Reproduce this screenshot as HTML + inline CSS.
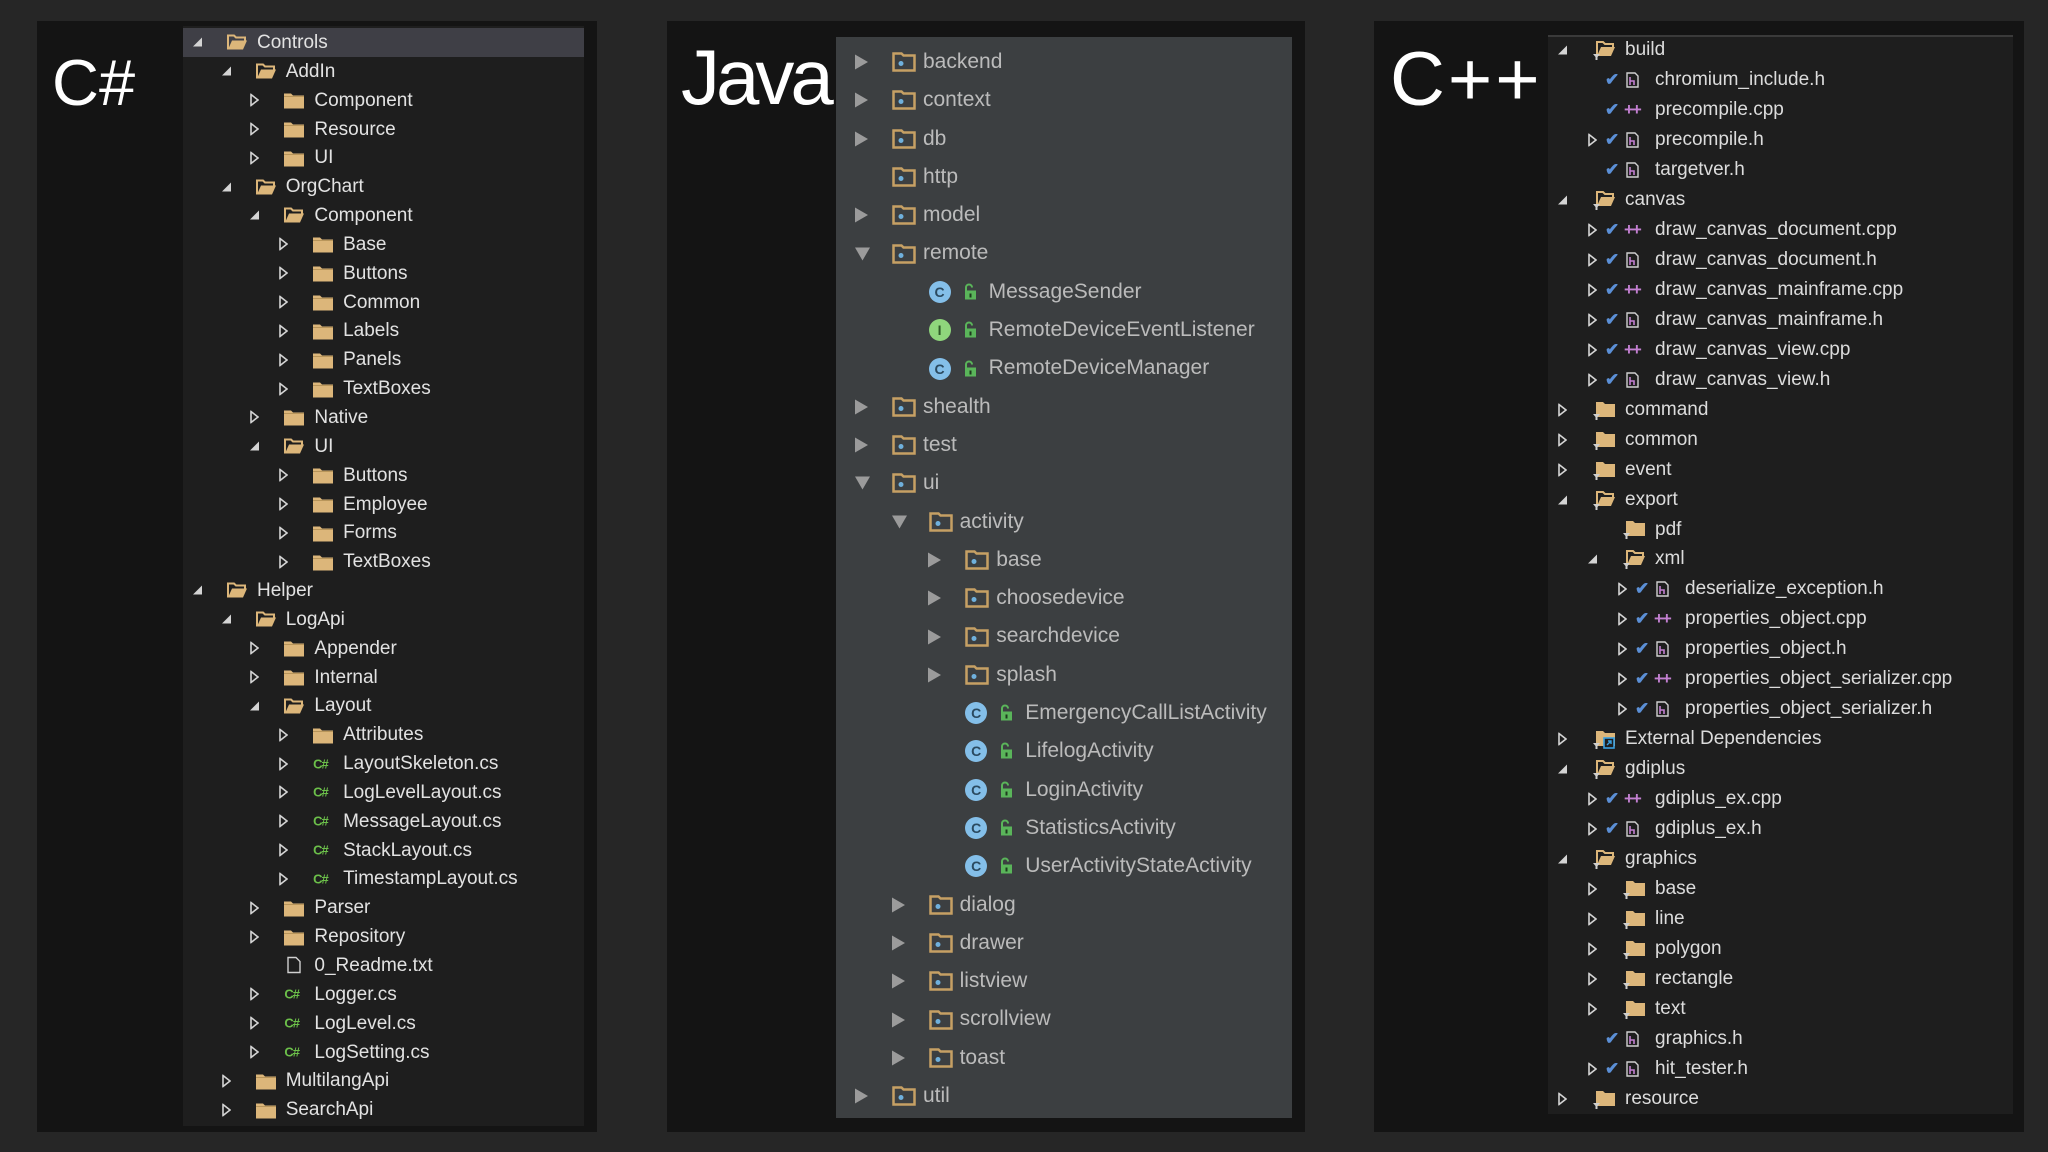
<!DOCTYPE html>
<html><head><meta charset="utf-8">
<style>
*{margin:0;padding:0;box-sizing:border-box}
body{width:2048px;height:1152px;background:#262626;position:relative;overflow:hidden;font-family:"Liberation Sans",sans-serif}
.panel{position:absolute;background:#141414}
.lbl{position:absolute;color:#fff;line-height:normal;white-space:nowrap}
.tree{position:absolute;overflow:hidden}
.r{position:relative;white-space:nowrap}
.r>*{position:absolute;top:50%;transform:translateY(-50%)}
.r>span{top:0;transform:none}
.l0{--l:0}.l1{--l:1}.l2{--l:2}.l3{--l:3}
/* C# */
#cs{left:183px;top:26px;width:401px;height:1100px;background:#1e1e1e;padding-top:2px}
#cs .r{height:28.85px}
#cs .r>span{left:calc(var(--l)*28.7px + 74px);line-height:30px;font-size:19px;color:#e2e2e2}
#cs .a{left:calc(var(--l)*28.7px + 10px)}
#cs .ic{left:calc(var(--l)*28.7px + 44px)}
#cs .cf{left:calc(var(--l)*28.7px + 44px);color:#6cc04a;font-weight:bold;font-size:13px;letter-spacing:-1px}
#cs .hl{background:#3f3f46}
/* Java */
#jv{left:836px;top:37px;width:456px;height:1081px;background:#3c3f41;padding-top:6px}
#jv .r{height:38.3px}
#jv .r>span{left:calc(var(--l)*36.6px + 87px);line-height:38.3px;font-size:21px;color:#bbbbbb}
#jv .r>span.k{left:calc(var(--l)*36.6px + 116px)}
#jv .a{left:calc(var(--l)*36.6px + 19px)}
#jv .ic{left:calc(var(--l)*36.6px + 56px)}
#jv .cl{left:calc(var(--l)*36.6px + 56px);width:22px;height:22px;border-radius:50%;background:#84bfe9;color:#2b4a60;font-size:14px;font-weight:bold;text-align:center;line-height:22px}
#jv .cl.i{background:#8fd67c;color:#2f5a28}
#jv .lk{left:calc(var(--l)*36.6px + 90px)}
/* C++ */
#cp{left:1548px;top:35px;width:465px;height:1079px;background:#1e1e1e;border-top:2px solid #3a3a3a}
#cp .in{position:absolute;left:0;top:-2px;width:100%}
#cp .r{height:29.97px}
#cp .r>span{left:calc(var(--l)*30px + 77px);line-height:30px;font-size:19px;color:#dcdcdc}
#cp .a{left:calc(var(--l)*30px + 10px)}
#cp .ic{left:calc(var(--l)*30px + 45px)}
#cp .ck{left:calc(var(--l)*30px + 27px);color:#5b8fd6;font-size:17px;font-weight:bold;font-style:normal}
#cp .fh{left:calc(var(--l)*30px + 48px)}
#cp .pp{left:calc(var(--l)*30px + 46px);color:#c27fd0;font-weight:bold;font-size:17px;letter-spacing:-2px}
</style></head><body>
<svg width="0" height="0" style="position:absolute">
<defs>
<symbol id="ex" viewBox="0 0 9 9"><polygon points="9,0 9,9 0,9" fill="#d4d4d4"/></symbol>
<symbol id="co" viewBox="0 0 9 13"><polygon points="1,1 8,6.5 1,12" fill="none" stroke="#d4d4d4" stroke-width="1.6"/></symbol>
<symbol id="fc" viewBox="0 0 20 17"><path d="M0 2h7l2 2h11v13H0z" fill="#dcb67a"/><path d="M0 5h20" stroke="#b8955a" stroke-width="1"/></symbol>
<symbol id="fo" viewBox="0 0 20 17"><path d="M1 16V2h6l2 2h9v3" fill="none" stroke="#dcb67a" stroke-width="2"/><path d="M1 16l4-9h15l-4 9z" fill="#dcb67a"/></symbol>
<symbol id="tx" viewBox="0 0 14 17"><path d="M1 1h8l4 4v11H1z" fill="none" stroke="#d0d0d0" stroke-width="1.4"/></symbol>
<symbol id="jr" viewBox="0 0 13 15"><polygon points="0,0 13,7.5 0,15" fill="#9b9b9b"/></symbol>
<symbol id="jd" viewBox="0 0 15 13"><polygon points="0,0 15,0 7.5,13" fill="#9b9b9b"/></symbol>
<symbol id="jf" viewBox="0 0 24 20"><path d="M1.5 3.5V1.5h8l2 2h11v15h-21z" fill="none" stroke="#c6a064" stroke-width="2.5"/><circle cx="9" cy="11.5" r="2.5" fill="#6fb0dc"/></symbol>
<symbol id="lk" viewBox="0 0 13 17"><path d="M3 7V4a3 3 0 0 1 6 0" fill="none" stroke="#5ab55a" stroke-width="2"/><rect x="2" y="7" width="11" height="9" fill="#5ab55a"/><rect x="6.5" y="10" width="2" height="4" fill="#1e3a1e"/></symbol>
<symbol id="ff" viewBox="0 0 22 20"><path d="M4 15V2h6l2 2h8v3" fill="none" stroke="#dcb67a" stroke-width="2"/><path d="M4 16l4-9h14l-4 9z" fill="#dcb67a"/><path d="M0 14h7l-2.5 3v3h-2v-3z" fill="#cfcfcf"/></symbol>
<symbol id="fcf" viewBox="0 0 22 20"><path d="M3 2h7l2 2h10v13H3z" fill="#dcb67a"/><path d="M0 14h7l-2.5 3v3h-2v-3z" fill="#cfcfcf"/></symbol>
<symbol id="fe" viewBox="0 0 22 20"><path d="M3 2h7l2 2h10v13H3z" fill="#dcb67a"/><rect x="11" y="9" width="10" height="10" fill="#1e1e1e" stroke="#3aa0e0" stroke-width="1.6"/><path d="M14 16l4-4m-3 0h3v3" stroke="#3aa0e0" stroke-width="1.4" fill="none"/><path d="M0 14h7l-2.5 3v3h-2v-3z" fill="#cfcfcf"/></symbol>
<symbol id="hf" viewBox="0 0 13 16"><path d="M1 1h8l3 3v11H1z" fill="none" stroke="#cfcfcf" stroke-width="1.4"/><path d="M4 5v8M4 9h4v4" fill="none" stroke="#c27fd0" stroke-width="1.6"/></symbol>
</defs></svg>

<div class="panel" style="left:37px;top:21px;width:560px;height:1111px"></div>
<div class="panel" style="left:667px;top:21px;width:638px;height:1111px"></div>
<div class="panel" style="left:1374px;top:21px;width:650px;height:1111px"></div>

<div class="lbl" style="left:52px;top:45px;font-size:65px">C#</div>
<div class="lbl" style="left:681px;top:32px;font-size:78px;letter-spacing:-4px">Java</div>
<div class="lbl" style="left:1390px;top:36px;font-size:76px;letter-spacing:3px">C++</div>

<div class="tree" id="cs">
<div class="r l0 hl"><svg class="a" width="9" height="9"><use href="#ex"/></svg><svg class="ic" width="20" height="17"><use href="#fo"/></svg><span>Controls</span></div>
<div class="r l1"><svg class="a" width="9" height="9"><use href="#ex"/></svg><svg class="ic" width="20" height="17"><use href="#fo"/></svg><span>AddIn</span></div>
<div class="r l2"><svg class="a" width="9" height="13"><use href="#co"/></svg><svg class="ic" width="20" height="17"><use href="#fc"/></svg><span>Component</span></div>
<div class="r l2"><svg class="a" width="9" height="13"><use href="#co"/></svg><svg class="ic" width="20" height="17"><use href="#fc"/></svg><span>Resource</span></div>
<div class="r l2"><svg class="a" width="9" height="13"><use href="#co"/></svg><svg class="ic" width="20" height="17"><use href="#fc"/></svg><span>UI</span></div>
<div class="r l1"><svg class="a" width="9" height="9"><use href="#ex"/></svg><svg class="ic" width="20" height="17"><use href="#fo"/></svg><span>OrgChart</span></div>
<div class="r l2"><svg class="a" width="9" height="9"><use href="#ex"/></svg><svg class="ic" width="20" height="17"><use href="#fo"/></svg><span>Component</span></div>
<div class="r l3"><svg class="a" width="9" height="13"><use href="#co"/></svg><svg class="ic" width="20" height="17"><use href="#fc"/></svg><span>Base</span></div>
<div class="r l3"><svg class="a" width="9" height="13"><use href="#co"/></svg><svg class="ic" width="20" height="17"><use href="#fc"/></svg><span>Buttons</span></div>
<div class="r l3"><svg class="a" width="9" height="13"><use href="#co"/></svg><svg class="ic" width="20" height="17"><use href="#fc"/></svg><span>Common</span></div>
<div class="r l3"><svg class="a" width="9" height="13"><use href="#co"/></svg><svg class="ic" width="20" height="17"><use href="#fc"/></svg><span>Labels</span></div>
<div class="r l3"><svg class="a" width="9" height="13"><use href="#co"/></svg><svg class="ic" width="20" height="17"><use href="#fc"/></svg><span>Panels</span></div>
<div class="r l3"><svg class="a" width="9" height="13"><use href="#co"/></svg><svg class="ic" width="20" height="17"><use href="#fc"/></svg><span>TextBoxes</span></div>
<div class="r l2"><svg class="a" width="9" height="13"><use href="#co"/></svg><svg class="ic" width="20" height="17"><use href="#fc"/></svg><span>Native</span></div>
<div class="r l2"><svg class="a" width="9" height="9"><use href="#ex"/></svg><svg class="ic" width="20" height="17"><use href="#fo"/></svg><span>UI</span></div>
<div class="r l3"><svg class="a" width="9" height="13"><use href="#co"/></svg><svg class="ic" width="20" height="17"><use href="#fc"/></svg><span>Buttons</span></div>
<div class="r l3"><svg class="a" width="9" height="13"><use href="#co"/></svg><svg class="ic" width="20" height="17"><use href="#fc"/></svg><span>Employee</span></div>
<div class="r l3"><svg class="a" width="9" height="13"><use href="#co"/></svg><svg class="ic" width="20" height="17"><use href="#fc"/></svg><span>Forms</span></div>
<div class="r l3"><svg class="a" width="9" height="13"><use href="#co"/></svg><svg class="ic" width="20" height="17"><use href="#fc"/></svg><span>TextBoxes</span></div>
<div class="r l0"><svg class="a" width="9" height="9"><use href="#ex"/></svg><svg class="ic" width="20" height="17"><use href="#fo"/></svg><span>Helper</span></div>
<div class="r l1"><svg class="a" width="9" height="9"><use href="#ex"/></svg><svg class="ic" width="20" height="17"><use href="#fo"/></svg><span>LogApi</span></div>
<div class="r l2"><svg class="a" width="9" height="13"><use href="#co"/></svg><svg class="ic" width="20" height="17"><use href="#fc"/></svg><span>Appender</span></div>
<div class="r l2"><svg class="a" width="9" height="13"><use href="#co"/></svg><svg class="ic" width="20" height="17"><use href="#fc"/></svg><span>Internal</span></div>
<div class="r l2"><svg class="a" width="9" height="9"><use href="#ex"/></svg><svg class="ic" width="20" height="17"><use href="#fo"/></svg><span>Layout</span></div>
<div class="r l3"><svg class="a" width="9" height="13"><use href="#co"/></svg><svg class="ic" width="20" height="17"><use href="#fc"/></svg><span>Attributes</span></div>
<div class="r l3"><svg class="a" width="9" height="13"><use href="#co"/></svg><b class="cf">C#</b><span>LayoutSkeleton.cs</span></div>
<div class="r l3"><svg class="a" width="9" height="13"><use href="#co"/></svg><b class="cf">C#</b><span>LogLevelLayout.cs</span></div>
<div class="r l3"><svg class="a" width="9" height="13"><use href="#co"/></svg><b class="cf">C#</b><span>MessageLayout.cs</span></div>
<div class="r l3"><svg class="a" width="9" height="13"><use href="#co"/></svg><b class="cf">C#</b><span>StackLayout.cs</span></div>
<div class="r l3"><svg class="a" width="9" height="13"><use href="#co"/></svg><b class="cf">C#</b><span>TimestampLayout.cs</span></div>
<div class="r l2"><svg class="a" width="9" height="13"><use href="#co"/></svg><svg class="ic" width="20" height="17"><use href="#fc"/></svg><span>Parser</span></div>
<div class="r l2"><svg class="a" width="9" height="13"><use href="#co"/></svg><svg class="ic" width="20" height="17"><use href="#fc"/></svg><span>Repository</span></div>
<div class="r l2"><svg class="ic" width="14" height="17" style="margin-left:3px"><use href="#tx"/></svg><span>0_Readme.txt</span></div>
<div class="r l2"><svg class="a" width="9" height="13"><use href="#co"/></svg><b class="cf">C#</b><span>Logger.cs</span></div>
<div class="r l2"><svg class="a" width="9" height="13"><use href="#co"/></svg><b class="cf">C#</b><span>LogLevel.cs</span></div>
<div class="r l2"><svg class="a" width="9" height="13"><use href="#co"/></svg><b class="cf">C#</b><span>LogSetting.cs</span></div>
<div class="r l1"><svg class="a" width="9" height="13"><use href="#co"/></svg><svg class="ic" width="20" height="17"><use href="#fc"/></svg><span>MultilangApi</span></div>
<div class="r l1"><svg class="a" width="9" height="13"><use href="#co"/></svg><svg class="ic" width="20" height="17"><use href="#fc"/></svg><span>SearchApi</span></div>
</div>

<div class="tree" id="jv">
<div class="r l0"><svg class="a" width="13" height="15"><use href="#jr"/></svg><svg class="ic" width="24" height="20"><use href="#jf"/></svg><span>backend</span></div>
<div class="r l0"><svg class="a" width="13" height="15"><use href="#jr"/></svg><svg class="ic" width="24" height="20"><use href="#jf"/></svg><span>context</span></div>
<div class="r l0"><svg class="a" width="13" height="15"><use href="#jr"/></svg><svg class="ic" width="24" height="20"><use href="#jf"/></svg><span>db</span></div>
<div class="r l0"><svg class="ic" width="24" height="20"><use href="#jf"/></svg><span>http</span></div>
<div class="r l0"><svg class="a" width="13" height="15"><use href="#jr"/></svg><svg class="ic" width="24" height="20"><use href="#jf"/></svg><span>model</span></div>
<div class="r l0"><svg class="a" width="15" height="13"><use href="#jd"/></svg><svg class="ic" width="24" height="20"><use href="#jf"/></svg><span>remote</span></div>
<div class="r l1"><b class="cl">C</b><svg class="lk" width="13" height="17"><use href="#lk"/></svg><span class="k">MessageSender</span></div>
<div class="r l1"><b class="cl i">I</b><svg class="lk" width="13" height="17"><use href="#lk"/></svg><span class="k">RemoteDeviceEventListener</span></div>
<div class="r l1"><b class="cl">C</b><svg class="lk" width="13" height="17"><use href="#lk"/></svg><span class="k">RemoteDeviceManager</span></div>
<div class="r l0"><svg class="a" width="13" height="15"><use href="#jr"/></svg><svg class="ic" width="24" height="20"><use href="#jf"/></svg><span>shealth</span></div>
<div class="r l0"><svg class="a" width="13" height="15"><use href="#jr"/></svg><svg class="ic" width="24" height="20"><use href="#jf"/></svg><span>test</span></div>
<div class="r l0"><svg class="a" width="15" height="13"><use href="#jd"/></svg><svg class="ic" width="24" height="20"><use href="#jf"/></svg><span>ui</span></div>
<div class="r l1"><svg class="a" width="15" height="13"><use href="#jd"/></svg><svg class="ic" width="24" height="20"><use href="#jf"/></svg><span>activity</span></div>
<div class="r l2"><svg class="a" width="13" height="15"><use href="#jr"/></svg><svg class="ic" width="24" height="20"><use href="#jf"/></svg><span>base</span></div>
<div class="r l2"><svg class="a" width="13" height="15"><use href="#jr"/></svg><svg class="ic" width="24" height="20"><use href="#jf"/></svg><span>choosedevice</span></div>
<div class="r l2"><svg class="a" width="13" height="15"><use href="#jr"/></svg><svg class="ic" width="24" height="20"><use href="#jf"/></svg><span>searchdevice</span></div>
<div class="r l2"><svg class="a" width="13" height="15"><use href="#jr"/></svg><svg class="ic" width="24" height="20"><use href="#jf"/></svg><span>splash</span></div>
<div class="r l2"><b class="cl">C</b><svg class="lk" width="13" height="17"><use href="#lk"/></svg><span class="k">EmergencyCallListActivity</span></div>
<div class="r l2"><b class="cl">C</b><svg class="lk" width="13" height="17"><use href="#lk"/></svg><span class="k">LifelogActivity</span></div>
<div class="r l2"><b class="cl">C</b><svg class="lk" width="13" height="17"><use href="#lk"/></svg><span class="k">LoginActivity</span></div>
<div class="r l2"><b class="cl">C</b><svg class="lk" width="13" height="17"><use href="#lk"/></svg><span class="k">StatisticsActivity</span></div>
<div class="r l2"><b class="cl">C</b><svg class="lk" width="13" height="17"><use href="#lk"/></svg><span class="k">UserActivityStateActivity</span></div>
<div class="r l1"><svg class="a" width="13" height="15"><use href="#jr"/></svg><svg class="ic" width="24" height="20"><use href="#jf"/></svg><span>dialog</span></div>
<div class="r l1"><svg class="a" width="13" height="15"><use href="#jr"/></svg><svg class="ic" width="24" height="20"><use href="#jf"/></svg><span>drawer</span></div>
<div class="r l1"><svg class="a" width="13" height="15"><use href="#jr"/></svg><svg class="ic" width="24" height="20"><use href="#jf"/></svg><span>listview</span></div>
<div class="r l1"><svg class="a" width="13" height="15"><use href="#jr"/></svg><svg class="ic" width="24" height="20"><use href="#jf"/></svg><span>scrollview</span></div>
<div class="r l1"><svg class="a" width="13" height="15"><use href="#jr"/></svg><svg class="ic" width="24" height="20"><use href="#jf"/></svg><span>toast</span></div>
<div class="r l0"><svg class="a" width="13" height="15"><use href="#jr"/></svg><svg class="ic" width="24" height="20"><use href="#jf"/></svg><span>util</span></div>
</div>

<div class="tree" id="cp"><div class="in">
<div class="r l0"><svg class="a" width="9" height="9"><use href="#ex"/></svg><svg class="ic" width="22" height="20"><use href="#ff"/></svg><span>build</span></div>
<div class="r l1"><i class="ck">✔</i><svg class="fh" width="13" height="16"><use href="#hf"/></svg><span>chromium_include.h</span></div>
<div class="r l1"><i class="ck">✔</i><b class="pp">++</b><span>precompile.cpp</span></div>
<div class="r l1"><svg class="a" width="9" height="13"><use href="#co"/></svg><i class="ck">✔</i><svg class="fh" width="13" height="16"><use href="#hf"/></svg><span>precompile.h</span></div>
<div class="r l1"><i class="ck">✔</i><svg class="fh" width="13" height="16"><use href="#hf"/></svg><span>targetver.h</span></div>
<div class="r l0"><svg class="a" width="9" height="9"><use href="#ex"/></svg><svg class="ic" width="22" height="20"><use href="#ff"/></svg><span>canvas</span></div>
<div class="r l1"><svg class="a" width="9" height="13"><use href="#co"/></svg><i class="ck">✔</i><b class="pp">++</b><span>draw_canvas_document.cpp</span></div>
<div class="r l1"><svg class="a" width="9" height="13"><use href="#co"/></svg><i class="ck">✔</i><svg class="fh" width="13" height="16"><use href="#hf"/></svg><span>draw_canvas_document.h</span></div>
<div class="r l1"><svg class="a" width="9" height="13"><use href="#co"/></svg><i class="ck">✔</i><b class="pp">++</b><span>draw_canvas_mainframe.cpp</span></div>
<div class="r l1"><svg class="a" width="9" height="13"><use href="#co"/></svg><i class="ck">✔</i><svg class="fh" width="13" height="16"><use href="#hf"/></svg><span>draw_canvas_mainframe.h</span></div>
<div class="r l1"><svg class="a" width="9" height="13"><use href="#co"/></svg><i class="ck">✔</i><b class="pp">++</b><span>draw_canvas_view.cpp</span></div>
<div class="r l1"><svg class="a" width="9" height="13"><use href="#co"/></svg><i class="ck">✔</i><svg class="fh" width="13" height="16"><use href="#hf"/></svg><span>draw_canvas_view.h</span></div>
<div class="r l0"><svg class="a" width="9" height="13"><use href="#co"/></svg><svg class="ic" width="22" height="20"><use href="#fcf"/></svg><span>command</span></div>
<div class="r l0"><svg class="a" width="9" height="13"><use href="#co"/></svg><svg class="ic" width="22" height="20"><use href="#fcf"/></svg><span>common</span></div>
<div class="r l0"><svg class="a" width="9" height="13"><use href="#co"/></svg><svg class="ic" width="22" height="20"><use href="#fcf"/></svg><span>event</span></div>
<div class="r l0"><svg class="a" width="9" height="9"><use href="#ex"/></svg><svg class="ic" width="22" height="20"><use href="#ff"/></svg><span>export</span></div>
<div class="r l1"><svg class="ic" width="22" height="20"><use href="#fcf"/></svg><span>pdf</span></div>
<div class="r l1"><svg class="a" width="9" height="9"><use href="#ex"/></svg><svg class="ic" width="22" height="20"><use href="#ff"/></svg><span>xml</span></div>
<div class="r l2"><svg class="a" width="9" height="13"><use href="#co"/></svg><i class="ck">✔</i><svg class="fh" width="13" height="16"><use href="#hf"/></svg><span>deserialize_exception.h</span></div>
<div class="r l2"><svg class="a" width="9" height="13"><use href="#co"/></svg><i class="ck">✔</i><b class="pp">++</b><span>properties_object.cpp</span></div>
<div class="r l2"><svg class="a" width="9" height="13"><use href="#co"/></svg><i class="ck">✔</i><svg class="fh" width="13" height="16"><use href="#hf"/></svg><span>properties_object.h</span></div>
<div class="r l2"><svg class="a" width="9" height="13"><use href="#co"/></svg><i class="ck">✔</i><b class="pp">++</b><span>properties_object_serializer.cpp</span></div>
<div class="r l2"><svg class="a" width="9" height="13"><use href="#co"/></svg><i class="ck">✔</i><svg class="fh" width="13" height="16"><use href="#hf"/></svg><span>properties_object_serializer.h</span></div>
<div class="r l0"><svg class="a" width="9" height="13"><use href="#co"/></svg><svg class="ic" width="22" height="20"><use href="#fe"/></svg><span>External Dependencies</span></div>
<div class="r l0"><svg class="a" width="9" height="9"><use href="#ex"/></svg><svg class="ic" width="22" height="20"><use href="#ff"/></svg><span>gdiplus</span></div>
<div class="r l1"><svg class="a" width="9" height="13"><use href="#co"/></svg><i class="ck">✔</i><b class="pp">++</b><span>gdiplus_ex.cpp</span></div>
<div class="r l1"><svg class="a" width="9" height="13"><use href="#co"/></svg><i class="ck">✔</i><svg class="fh" width="13" height="16"><use href="#hf"/></svg><span>gdiplus_ex.h</span></div>
<div class="r l0"><svg class="a" width="9" height="9"><use href="#ex"/></svg><svg class="ic" width="22" height="20"><use href="#ff"/></svg><span>graphics</span></div>
<div class="r l1"><svg class="a" width="9" height="13"><use href="#co"/></svg><svg class="ic" width="22" height="20"><use href="#fcf"/></svg><span>base</span></div>
<div class="r l1"><svg class="a" width="9" height="13"><use href="#co"/></svg><svg class="ic" width="22" height="20"><use href="#fcf"/></svg><span>line</span></div>
<div class="r l1"><svg class="a" width="9" height="13"><use href="#co"/></svg><svg class="ic" width="22" height="20"><use href="#fcf"/></svg><span>polygon</span></div>
<div class="r l1"><svg class="a" width="9" height="13"><use href="#co"/></svg><svg class="ic" width="22" height="20"><use href="#fcf"/></svg><span>rectangle</span></div>
<div class="r l1"><svg class="a" width="9" height="13"><use href="#co"/></svg><svg class="ic" width="22" height="20"><use href="#fcf"/></svg><span>text</span></div>
<div class="r l1"><i class="ck">✔</i><svg class="fh" width="13" height="16"><use href="#hf"/></svg><span>graphics.h</span></div>
<div class="r l1"><svg class="a" width="9" height="13"><use href="#co"/></svg><i class="ck">✔</i><svg class="fh" width="13" height="16"><use href="#hf"/></svg><span>hit_tester.h</span></div>
<div class="r l0"><svg class="a" width="9" height="13"><use href="#co"/></svg><svg class="ic" width="22" height="20"><use href="#fcf"/></svg><span>resource</span></div>
</div></div>
</body></html>
